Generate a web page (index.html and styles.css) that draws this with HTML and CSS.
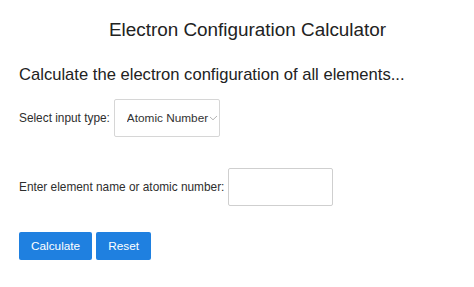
FILE: index.html
```html
<!DOCTYPE html>
<html lang="en">
<head>
<meta charset="utf-8">
<title>Electron Configuration Calculator</title>
<link rel="stylesheet" href="styles.css">
</head>
<body>
<main class="page">
  <h1 class="title">Electron Configuration Calculator</h1>
  <h2 class="subtitle">Calculate the electron configuration of all elements...</h2>
  <div class="row row-select">
    <label class="label" for="type">Select input type:</label>
    <div class="select-wrap">
      <select id="type" class="select">
        <option>Atomic Number</option>
        <option>Element Name</option>
      </select>
      <svg class="chev" width="9" height="6" viewBox="0 0 9 6" aria-hidden="true"><polyline points="1,2 4,4.8 8,1" fill="none" stroke="#b5b5b5" stroke-width="1"/></svg>
    </div>
  </div>
  <div class="row row-input">
    <label class="label" for="elem">Enter element name or atomic number:</label>
    <input id="elem" class="input" type="text">
  </div>
  <div class="buttons">
    <button class="btn" type="button">Calculate</button>
    <button class="btn" type="button">Reset</button>
  </div>
</main>
</body>
</html>
```
FILE: styles.css
```css
* { box-sizing: border-box; }
html, body { margin: 0; padding: 0; background: #fff; }
body { font-family: "Liberation Sans", Arial, sans-serif; }
.page {
  display: flex;
  flex-direction: column;
  align-items: flex-start;
  padding: 0 19px;
}
.title {
  align-self: stretch;
  margin: 19px 0 0 0;
  padding-left: 21px;
  text-align: center;
  font-size: 18.9px;
  line-height: 22px;
  font-weight: normal;
  color: #222;
}
.subtitle {
  margin: 24px 0 0 0;
  font-size: 16.6px;
  line-height: 20px;
  font-weight: normal;
  color: #222;
}
.row {
  display: flex;
  align-items: center;
  gap: 4px;
}
.row-select { margin-top: 14px; }
.row-input { margin-top: 31px; }
.label {
  font-size: 11.85px;
  color: #2e2e2e;
}
.select-wrap {
  position: relative;
  width: 106px;
  height: 38px;
}
.select {
  -webkit-appearance: none;
  appearance: none;
  width: 100%;
  height: 100%;
  margin: 0;
  padding: 0 0 0 12px;
  border: 1px solid #d6d6d6;
  border-radius: 2px;
  background: #fff;
  font-family: inherit;
  font-size: 11.8px;
  color: #333;
  outline: none;
}
.chev {
  position: absolute;
  left: 95px;
  top: 16px;
}
.input {
  width: 105px;
  height: 38px;
  margin: 0;
  border: 1px solid #cfcfcf;
  border-radius: 2px;
  background: #fff;
  font-family: inherit;
  font-size: 11.8px;
}
.buttons {
  display: flex;
  gap: 4px;
  margin-top: 26px;
}
.btn {
  height: 28px;
  margin: 0;
  padding: 0 12px;
  border: none;
  border-radius: 2px;
  background: #1f80e0;
  color: #fff;
  font-family: inherit;
  font-size: 11.8px;
}
```
